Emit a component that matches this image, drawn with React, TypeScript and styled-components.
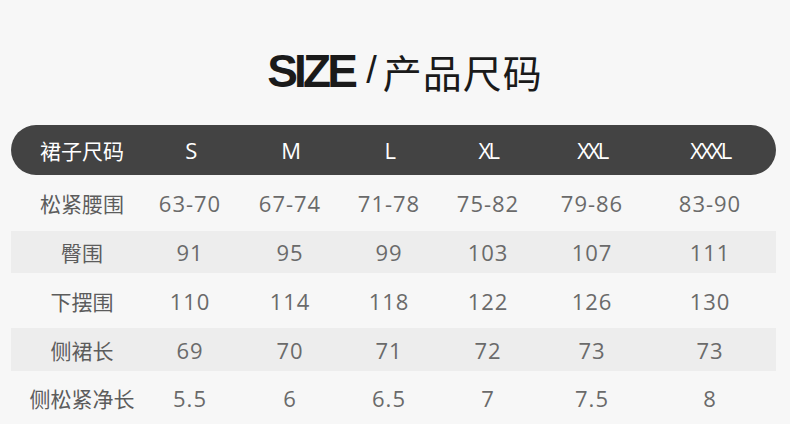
import * as React from 'react'
import styled, { createGlobalStyle } from 'styled-components'

const GlobalStyle = createGlobalStyle`
  html, body {
    margin: 0;
    padding: 0;
    background: #f7f7f7;
  }
  body {
    font-family: "Open Sans", "Noto Sans CJK SC", sans-serif;
  }
`

const Page = styled.div`
  width: 790px;
  height: 424px;
  overflow: hidden;
  background: #f7f7f7;
`

const TitleRow = styled.h1`
  margin: 0;
  height: 125px;
  display: flex;
  align-items: center;
  justify-content: center;
  padding-left: 20px;
  padding-top: 16px;
  box-sizing: border-box;
  font-weight: normal;
  color: #1a1a1a;
`

const SizeWord = styled.span`
  font-family: "Liberation Sans", Arial, sans-serif;
  font-weight: bold;
  font-size: 46px;
  letter-spacing: -3.8px;
`

const Slash = styled.span`
  font-family: "Liberation Sans", Arial, sans-serif;
  font-size: 38px;
  font-weight: 300;
  margin: 0 6px 0 12px;
`

const CnTitle = styled.span`
  font-family: "Noto Sans CJK SC", sans-serif;
  font-size: 39px;
  font-weight: 400;
  letter-spacing: 1px;
`

const Table = styled.div`
  margin-left: 11px;
  width: 765px;
`

const Row = styled.div<{ $striped?: boolean; $height: number }>`
  display: grid;
  grid-template-columns: 120px 96px 104px 94px 104px 104px 132px;
  padding-left: 11px;
  align-items: center;
  height: ${p => p.$height}px;
  background: ${p => (p.$striped ? '#ededed' : 'transparent')};
`

const HeadRow = styled(Row)`
  background: #434343;
  border-radius: 25px;
  color: #ffffff;
`

const HeadCell = styled.div`
  text-align: center;
  font-size: 22px;
  font-weight: 400;
  letter-spacing: -2.5px;
  &:first-child {
    font-family: "Noto Sans CJK SC", sans-serif;
    font-size: 21px;
    letter-spacing: 0;
  }
`

const LabelCell = styled.div`
  text-align: center;
  font-family: "Noto Sans CJK SC", sans-serif;
  font-size: 21px;
  font-weight: 400;
  color: #5c5c5c;
`

const ValueCell = styled.div`
  text-align: center;
  font-size: 22px;
  font-weight: 400;
  letter-spacing: 1px;
  color: #6a6a6a;
`

const sizes = ['S', 'M', 'L', 'XL', 'XXL', 'XXXL']

const rows = [
  { label: '松紧腰围', values: ['63-70', '67-74', '71-78', '75-82', '79-86', '83-90'], height: 56 },
  { label: '臀围', values: ['91', '95', '99', '103', '107', '111'], height: 42, striped: true },
  { label: '下摆围', values: ['110', '114', '118', '122', '126', '130'], height: 55 },
  { label: '侧裙长', values: ['69', '70', '71', '72', '73', '73'], height: 43, striped: true },
  { label: '侧松紧净长', values: ['5.5', '6', '6.5', '7', '7.5', '8'], height: 53 },
]

export default function App() {
  return <Page>
    <GlobalStyle />
    <TitleRow>
      <SizeWord>SIZE</SizeWord>
      <Slash>/</Slash>
      <CnTitle>产品尺码</CnTitle>
    </TitleRow>
    <Table>
      <HeadRow $height={50}>
        <HeadCell>裙子尺码</HeadCell>
        {sizes.map(s => <HeadCell key={s}>{s}</HeadCell>)}
      </HeadRow>
      {rows.map(r => (
        <Row key={r.label} $height={r.height} $striped={r.striped}>
          <LabelCell>{r.label}</LabelCell>
          {r.values.map((v, i) => <ValueCell key={i}>{v}</ValueCell>)}
        </Row>
      ))}
    </Table>
  </Page>
}
